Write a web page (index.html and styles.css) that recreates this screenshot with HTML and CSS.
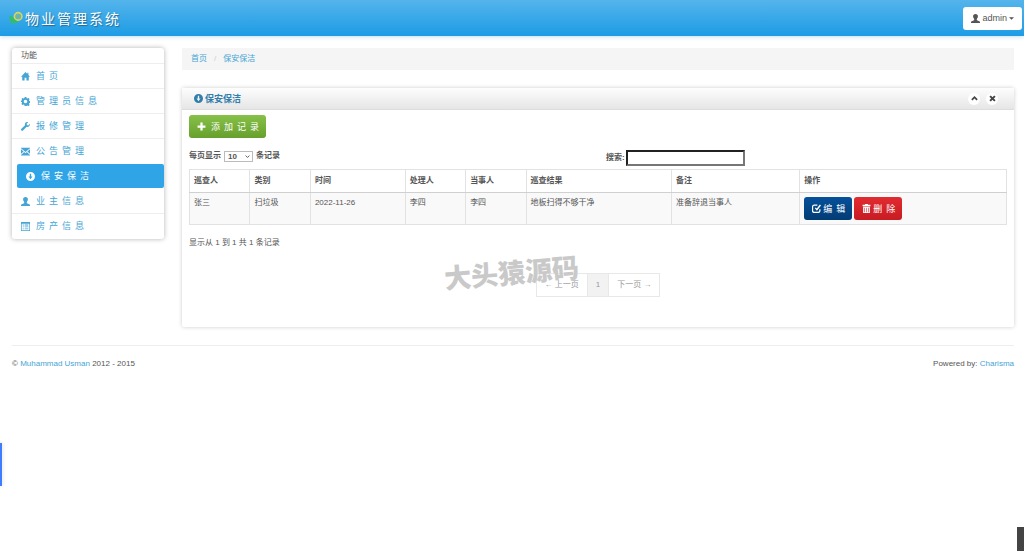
FILE: index.html
```
<!DOCTYPE html>
<html lang="zh-CN">
<head>
<meta charset="utf-8">
<meta name="viewport" content="width=device-width, initial-scale=1">
<title>物业管理系统</title>
<link rel="stylesheet" href="styles.css">
</head>
<body>
<svg class="sprite" aria-hidden="true">
  <symbol id="i-home" viewBox="0 0 16 16"><path d="M8 0 0 8.300h2.200V15h4.200v-4.600h3.200V15h4.200V8.300H16L13.200 5.400V1.500h-2v1.900z"/></symbol>
  <symbol id="i-cog" viewBox="0 0 16 16"><path fill-rule="evenodd" d="M6.500 0h3l.5 2.200 1.300.6 1.900-1.200 2.100 2.100-1.200 1.900.6 1.300 2.200.5v3l-2.200.5-.6 1.300 1.200 1.900-2.100 2.100-1.900-1.200-1.300.6-.5 2.200h-3L6 13.800l-1.300-.6-1.900 1.200-2.100-2.100 1.200-1.900-.6-1.300L0 8.900v-2l1.300-1 .6-1.300L.7 3.700l2.100-2.100 1.900 1.200L6 2.200zM8 4.800a3.200 3.200 0 1 0 0 6.400 3.200 3.200 0 0 0 0-6.400z"/></symbol>
  <symbol id="i-wrench" viewBox="0 0 16 16"><path d="M15.700 3.300 13 6l-2.500-.5L10 3 12.700.3C10.500-.4 8 .6 7.200 2.700c-.4 1-.4 2 0 3L.7 12.200a1.900 1.900 0 0 0 0 2.700c.8.8 2 .8 2.800 0L10 8.500c1.200.5 2.700.4 3.900-.4 1.800-1.100 2.400-3.200 1.800-4.800z"/></symbol>
  <symbol id="i-mail" viewBox="0 0 16 16"><path d="M0 1.500h16v.8L8 9 0 2.300zM0 4l4.700 4L0 12.200zM16 4v8.200L11.300 8zM5.700 8.900 8 10.900l2.300-2L16 14v1H0v-1z"/></symbol>
  <symbol id="i-info" viewBox="0 0 16 16"><path fill-rule="evenodd" d="M8 0a8 8 0 1 0 0 16A8 8 0 0 0 8 0zM6.800 3h2.400v5h2.300L8 12.700 4.500 8h2.300z"/></symbol>
  <symbol id="i-user" viewBox="0 0 16 16"><path d="M8 0c2.800 0 4.300 1.600 4.300 4.200 0 2-.8 3.600-2 4.500v1.600c0 .6.5.9 1.200 1.200l3.300 1.400c.8.3 1.200.9 1.200 1.800V16H0v-1.300c0-.9.4-1.500 1.200-1.800l3.300-1.400c.7-.3 1.200-.6 1.200-1.200V8.700c-1.200-.9-2-2.500-2-4.500C3.700 1.600 5.200 0 8 0z"/></symbol>
  <symbol id="i-list" viewBox="0 0 16 16"><path fill-rule="evenodd" d="M0 0h16v16H0zM1.200 3v11.800h13.600V3zM3 4.500h2V6H3zM6.500 4.500H13V6H6.500zM3 8h2v1.500H3zM6.500 8H13v1.500H6.500zM3 11.500h2V13H3zM6.500 11.500H13V13H6.500z"/></symbol>
  <symbol id="i-plus" viewBox="0 0 16 16"><path d="M6 1h4v5h5v4h-5v5H6v-5H1V6h5z"/></symbol>
  <symbol id="i-edit" viewBox="0 0 16 16"><path d="M9.500 2H4a3 3 0 0 0-3 3v7a3 3 0 0 0 3 3h7a3 3 0 0 0 3-3V9.500" fill="none" stroke="currentColor" stroke-width="2.200"/><path d="m5 7.500 1.500-1.500 2 2L14 1l2 1.700-7.300 9.300z"/></symbol>
  <symbol id="i-trash" viewBox="0 0 16 16"><path fill-rule="evenodd" d="M5.500 0h5v1.500H15V4H1V1.500h4.500zM2 5h12v11H2zM4.300 6.500v8h1v-8zM7.500 6.500v8h1v-8zM10.700 6.500v8h1v-8z"/></symbol>
  <symbol id="i-up" viewBox="0 0 16 16"><path d="m2 11 6-6 6 6" fill="none" stroke="currentColor" stroke-width="4"/></symbol>
  <symbol id="i-down" viewBox="0 0 16 16"><path d="m2 5 6 6 6-6" fill="none" stroke="currentColor" stroke-width="3"/></symbol>
  <symbol id="i-close" viewBox="0 0 16 16"><path d="m2.500 2.500 11 11m0-11-11 11" fill="none" stroke="currentColor" stroke-width="4.500"/></symbol>
  <symbol id="i-caret" viewBox="0 0 16 16"><path d="M0 4h16l-8 8z"/></symbol>
</svg>

<header class="navbar">
  <a class="brand" href="#">
    <svg class="brand-logo" viewBox="0 0 26 26" aria-hidden="true">
      <path d="M1 9c5 0 8 2 10 6l7 3c-3 5-10 7-15 4-2-3-3-8-2-13z" fill="#35b978"/>
      <circle cx="17" cy="10" r="7" fill="#6cb4ad" stroke="#d5d75c" stroke-width="3"/>
    </svg>
    <span>物业管理系统</span>
  </a>
  <button class="btn btn-user" type="button">
    <svg class="icon"><use href="#i-user"/></svg><span>admin</span><svg class="caret"><use href="#i-caret"/></svg>
  </button>
</header>

<div class="page">
  <div class="layout">
    <nav class="sidebar" aria-label="功能">
      <div class="sidebar-title">功能</div>
      <ul class="menu">
        <li><a href="#"><svg class="icon"><use href="#i-home"/></svg>首页</a></li>
        <li><a href="#"><svg class="icon"><use href="#i-cog"/></svg>管理员信息</a></li>
        <li><a href="#"><svg class="icon"><use href="#i-wrench"/></svg>报修管理</a></li>
        <li><a href="#"><svg class="icon"><use href="#i-mail"/></svg>公告管理</a></li>
        <li class="active"><a href="#" aria-current="page"><svg class="icon"><use href="#i-info"/></svg>保安保洁</a></li>
        <li><a href="#"><svg class="icon"><use href="#i-user"/></svg>业主信息</a></li>
        <li><a href="#"><svg class="icon"><use href="#i-list"/></svg>房产信息</a></li>
      </ul>
    </nav>

    <main class="content">
      <nav class="breadcrumb" aria-label="breadcrumb">
        <a href="#">首页</a><span class="sep">/</span><a href="#">保安保洁</a>
      </nav>

      <section class="box">
        <div class="box-header">
          <h2><svg class="icon"><use href="#i-info"/></svg>保安保洁</h2>
          <div class="box-tools">
            <button type="button" class="round" aria-label="收起"><svg><use href="#i-up"/></svg></button>
            <button type="button" class="round" aria-label="关闭"><svg><use href="#i-close"/></svg></button>
          </div>
        </div>
        <div class="box-body">
          <button class="btn btn-add" type="button"><svg class="icon"><use href="#i-plus"/></svg>添加记录</button>

          <div class="filters">
            <label class="length">每页显示
              <span class="select"><select><option>10</option><option>25</option><option>50</option></select><svg><use href="#i-down"/></svg></span>
              条记录</label>
            <label class="search">搜索:<input type="text"></label>
          </div>

          <table class="records">
            <colgroup><col class="c-person"><col class="c-person"><col class="c-time"><col class="c-person"><col class="c-person"><col class="c-result"><col class="c-note"><col></colgroup>
            <thead>
              <tr><th>巡查人</th><th>类别</th><th>时间</th><th>处理人</th><th>当事人</th><th>巡查结果</th><th>备注</th><th>操作</th></tr>
            </thead>
            <tbody>
              <tr>
                <td>张三</td><td>扫垃圾</td><td>2022-11-26</td><td>李四</td><td>李四</td><td>地板扫得不够干净</td><td>准备辞退当事人</td>
                <td><div class="actions">
                  <button class="btn btn-edit" type="button"><svg class="icon"><use href="#i-edit"/></svg>编辑</button>
                  <button class="btn btn-delete" type="button"><svg class="icon"><use href="#i-trash"/></svg>删除</button>
                </div></td>
              </tr>
            </tbody>
          </table>

          <p class="info">显示从 1 到 1 共 1 条记录</p>
          <ul class="pagination">
            <li><a href="#">← 上一页</a></li>
            <li class="current"><a href="#">1</a></li>
            <li><a href="#">下一页 →</a></li>
          </ul>
        </div>
      </section>
    </main>
  </div>

  <footer class="footer">
    <p>© <a href="#">Muhammad Usman</a> 2012 - 2015</p>
    <p>Powered by: <a href="#">Charisma</a></p>
  </footer>
</div>

<div class="watermark" aria-hidden="true">大头猿源码</div>
<div class="edge-tab"></div>
<div class="corner-tab"></div>
</body>
</html>
```
FILE: styles.css
```
* { box-sizing: border-box; }

body {
  margin: 0;
  background: #fff;
  color: #555;
  font: 8px/12px "Liberation Sans", "Noto Sans CJK SC", sans-serif;
}

a { color: #45a5d5; text-decoration: none; }
p, ul, h2 { margin: 0; padding: 0; }
ul { list-style: none; }
button, input, select { font: inherit; color: inherit; }
svg { fill: currentColor; flex: none; }
.sprite { display: none; }
.icon { width: 9px; height: 9px; }

/* top bar */
.navbar {
  display: flex;
  justify-content: space-between;
  align-items: center;
  height: 36px;
  padding: 0 2px 0 9px;
  background: linear-gradient(#54b4eb, #1d9ce5);
  box-shadow: 0 1px 4px rgba(60, 150, 210, .3);
}
.brand {
  display: flex;
  align-items: center;
  gap: 2px;
  color: #fff;
  font-family: KaiTi, STKaiti, "Noto Sans CJK SC", serif;
  font-size: 14px;
  line-height: 20px;
  letter-spacing: 2px;
  text-shadow: 1px 1px 1px rgba(0, 0, 0, .35);
}
.brand-logo { width: 14px; height: 14px; }

.btn {
  display: inline-flex;
  align-items: center;
  height: 23px;
  padding: 0 8px;
  border: 0;
  border-radius: 3px;
  font-size: 9px;
  letter-spacing: 4px;
  white-space: nowrap;
}
.btn-user {
  gap: 2px;
  background: #fff;
  letter-spacing: normal;
}
.caret { width: 5px; height: 5px; }

/* page grid */
.page { padding: 12px 10px 12px 12px; }
.layout {
  display: grid;
  grid-template-columns: 152px minmax(0, 1fr);
  gap: 18px;
  align-items: start;
}

.sidebar {
  padding-bottom: 1px;
  border-radius: 3px;
  box-shadow: 0 0 5px rgba(0, 0, 0, .3);
}
.sidebar-title { padding: 2px 9px 1px; }
.menu li { border-top: 1px solid #eee; }
.menu a {
  display: flex;
  align-items: center;
  gap: 6px;
  height: 24px;
  padding: 0 9px;
  font-size: 9px;
  letter-spacing: 4px;
}
.menu .active, .menu .active + li { border-color: transparent; }
.menu .active a {
  margin-left: 5px;
  border-radius: 2px;
  background: #2fa4e7;
  color: #fff;
}

.breadcrumb {
  display: flex;
  gap: 7px;
  padding: 5px 9px;
  background: #f5f5f5;
}
.sep { color: #ccc; }

/* panel */
.box {
  margin-top: 18px;
  border-radius: 2px;
  box-shadow: 0 0 4px rgba(0, 0, 0, .2);
}
.box-header {
  display: flex;
  justify-content: space-between;
  align-items: center;
  height: 22px;
  padding: 0 16px 0 12px;
  border-bottom: 1px solid #ddd;
  background: linear-gradient(#fdfdfd, #e6e6e6);
}
.box-header h2 {
  display: flex;
  align-items: center;
  gap: 2px;
  color: #317eac;
  font-size: 9px;
  line-height: 12px;
}
.box-tools { display: flex; gap: 6px; }
.round {
  display: grid;
  place-items: center;
  width: 12px;
  height: 12px;
  padding: 0;
  border: 0;
  border-radius: 50%;
  background: #fff;
  color: #444;
}
.round svg { width: 7px; height: 7px; }
.box-body { padding: 5px 7px 30px; }

.btn-add {
  gap: 5px;
  padding-right: 3px;
  background: linear-gradient(#88c149, #669f2b);
  color: #fff;
}

.filters {
  display: grid;
  grid-template-columns: 1fr 1fr;
  gap: 16px;
  margin: 12px 0 3px;
  font-weight: bold;
}
.length { display: flex; align-items: center; gap: 3px; height: 12px; }
.select { position: relative; display: flex; }
.select select {
  appearance: none;
  width: 29px;
  height: 11px;
  padding: 0 3px;
  border: 1px solid #bbb;
  border-radius: 0;
  background: #fff;
  line-height: 9px;
}
.select svg {
  position: absolute;
  top: 3px;
  right: 3px;
  width: 5px;
  height: 5px;
  pointer-events: none;
}
.search { display: flex; align-items: center; gap: 1px; }
.search input {
  width: 119px;
  height: 16px;
  padding: 0 2px;
  border: 2px inset #767676;
  background: #fff;
}

.records {
  width: 100%;
  border: 1px solid #e2e2e2;
  border-collapse: collapse;
  table-layout: fixed;
}
.c-person { width: 7.4%; }
.c-time { width: 11.6%; }
.c-result { width: 17.8%; }
.c-note { width: 15.7%; }
.records th, .records td {
  padding: 5px 4px;
  border: 1px solid #e2e2e2;
  text-align: left;
  vertical-align: top;
}
.records th { border-bottom-color: #d0d0d0; }
.records td { padding: 4px; background: #f9f9f9; }
.actions { display: flex; gap: 2px; }
.btn-edit, .btn-delete { gap: 2px; padding-right: 3px; color: #fff; }
.btn-edit { background: linear-gradient(#04519b, #033c73); }
.btn-delete { background: linear-gradient(#e12b31, #c71c22); }

.info { margin-top: 12px; }
.pagination {
  display: flex;
  justify-content: center;
  margin-top: 24px;
}
.pagination li { border: 1px solid #e8e8e8; }
.pagination li + li { border-left: 0; }
.pagination a { display: block; padding: 5px 8px; color: #999; }
.pagination .current { background: #f2f2f2; }

.footer {
  display: flex;
  justify-content: space-between;
  margin-top: 18px;
  padding-top: 12px;
  border-top: 1px solid #eee;
}

/* layers over the page */
.watermark {
  position: absolute;
  top: 254px;
  left: 444px;
  color: #c9c9c9;
  font: 900 27px/36px "Noto Sans CJK SC", sans-serif;
  transform: rotate(-5deg);
}
.edge-tab {
  position: fixed;
  top: 443px;
  left: 0;
  width: 2px;
  height: 43px;
  background: #3f7cff;
  box-shadow: 0 0 4px rgba(0, 0, 0, .2);
}
.corner-tab {
  position: fixed;
  right: 0;
  bottom: 0;
  width: 7px;
  height: 24px;
  background: #444;
}
```
